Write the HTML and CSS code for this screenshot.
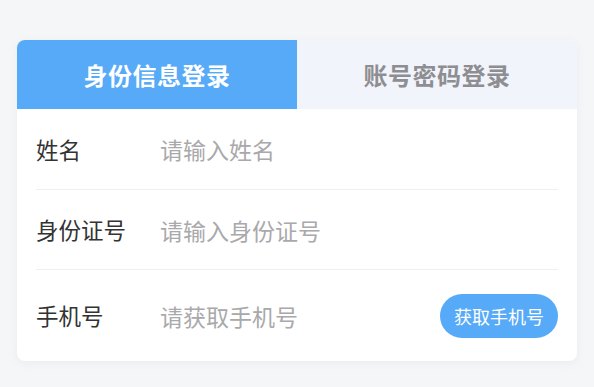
FILE: index.html
```html
<!DOCTYPE html>
<html lang="zh">
<head>
<meta charset="utf-8">
<link rel="stylesheet" href="styles.css">
</head>
<body>
<div class="page">
  <div class="card">
    <div class="tabs">
      <div class="tab active">身份信息登录</div>
      <div class="tab">账号密码登录</div>
    </div>
    <div class="form">
      <div class="row">
        <div class="label">姓名</div>
        <div class="placeholder">请输入姓名</div>
      </div>
      <div class="row">
        <div class="label">身份证号</div>
        <div class="placeholder">请输入身份证号</div>
      </div>
      <div class="row last">
        <div class="label">手机号</div>
        <div class="placeholder">请获取手机号</div>
        <div class="btn">获取手机号</div>
      </div>
    </div>
  </div>
</div>
</body>
</html>
```

FILE: styles.css
```css
* { box-sizing: border-box; }
html, body { margin: 0; padding: 0; }
body {
  background: #f5f6f8;
  font-family: "Noto Sans CJK SC", "Noto Sans", sans-serif;
  width: 594px;
  height: 387px;
  overflow: hidden;
}
.page {
  padding: 40px 17px 0 17px;
}
.card {
  width: 560px;
  background: #ffffff;
  border-radius: 8px;
  overflow: hidden;
  box-shadow: 0 2px 8px rgba(200, 210, 220, 0.25);
}
.tabs {
  display: flex;
  height: 69px;
  background: #f1f4fb;
}
.tab {
  flex: 1;
  display: flex;
  align-items: center;
  justify-content: center;
  font-size: 24px;
  font-weight: 700;
  color: #8e8e92;
  letter-spacing: 0.5px;
}
.tab.active {
  background: #57aaf7;
  color: #ffffff;
}
.form {
  padding: 0 19px;
}
.row {
  display: flex;
  align-items: center;
  height: 81px;
  border-bottom: 1px solid #eeeff1;
}
.row + .row { height: 80px; }
.row.last {
  height: 91px;
  border-bottom: none;
}
.label {
  width: 124px;
  font-size: 22.5px;
  color: #333333;
  padding-bottom: 1px;
}
.placeholder {
  flex: 1;
  font-size: 23px;
  color: #a9a9ab;
}
.btn {
  height: 44px;
  padding: 0 14px;
  border-radius: 22px;
  background: #57aaf7;
  color: #ffffff;
  font-size: 18px;
  display: flex;
  align-items: center;
}
```
